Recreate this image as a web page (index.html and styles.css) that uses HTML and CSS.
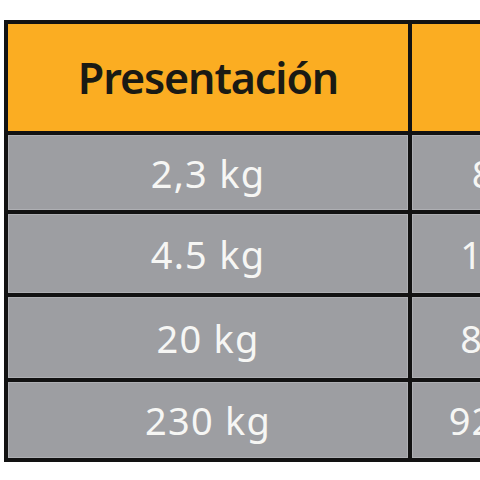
FILE: index.html
```html
<!DOCTYPE html>
<html lang="es">
<head>
<meta charset="utf-8">
<title>Presentación</title>
<link rel="stylesheet" href="styles.css">
</head>
<body>
<table class="spec">
  <thead>
    <tr class="head-row">
      <th class="col-a">Presentación</th>
      <th class="col-b">Precio</th>
    </tr>
  </thead>
  <tbody>
    <tr class="r1"><td>2,3 kg</td><td>8.990 CLP</td></tr>
    <tr class="r2"><td>4.5 kg</td><td>15.990 CLP</td></tr>
    <tr class="r3"><td>20 kg</td><td>85.990 CLP</td></tr>
    <tr class="r4"><td>230 kg</td><td>920.000 CLP</td></tr>
  </tbody>
</table>
</body>
</html>
```
FILE: styles.css
```css
html, body {
  margin: 0;
  padding: 0;
  overflow: hidden;
  background: #ffffff;
  width: 480px;
  height: 480px;
}
body {
  padding: 20px 0 0 4px;
  box-sizing: border-box;
}
.spec {
  border-collapse: collapse;
  table-layout: fixed;
  width: 716px;
  border: 4px solid #121212;
  font-family: "Noto Sans", "Open Sans", sans-serif;
}
.spec th,
.spec td {
  border: 4px solid #121212;
  padding: 0;
  text-align: center;
  vertical-align: middle;
  white-space: nowrap;
}
.col-a { width: 400px; }
.col-b { width: 304px; }
.head-row th {
  background: #fbad22;
  color: #1a1a14;
  font-weight: 600;
  font-size: 43px;
  letter-spacing: -1.1px;
  height: 107px;
}
.spec td {
  background: #9d9ea2;
  color: #f6f6f4;
  font-weight: 400;
  font-size: 38px;
  letter-spacing: 1.2px;
  box-shadow: inset 0 0 0 1px #aeafb3;
}
.r1 td { height: 75px; }
.r2 td { height: 79px; }
.r3 td { height: 81px; }
.r4 td { height: 76px; }
```
